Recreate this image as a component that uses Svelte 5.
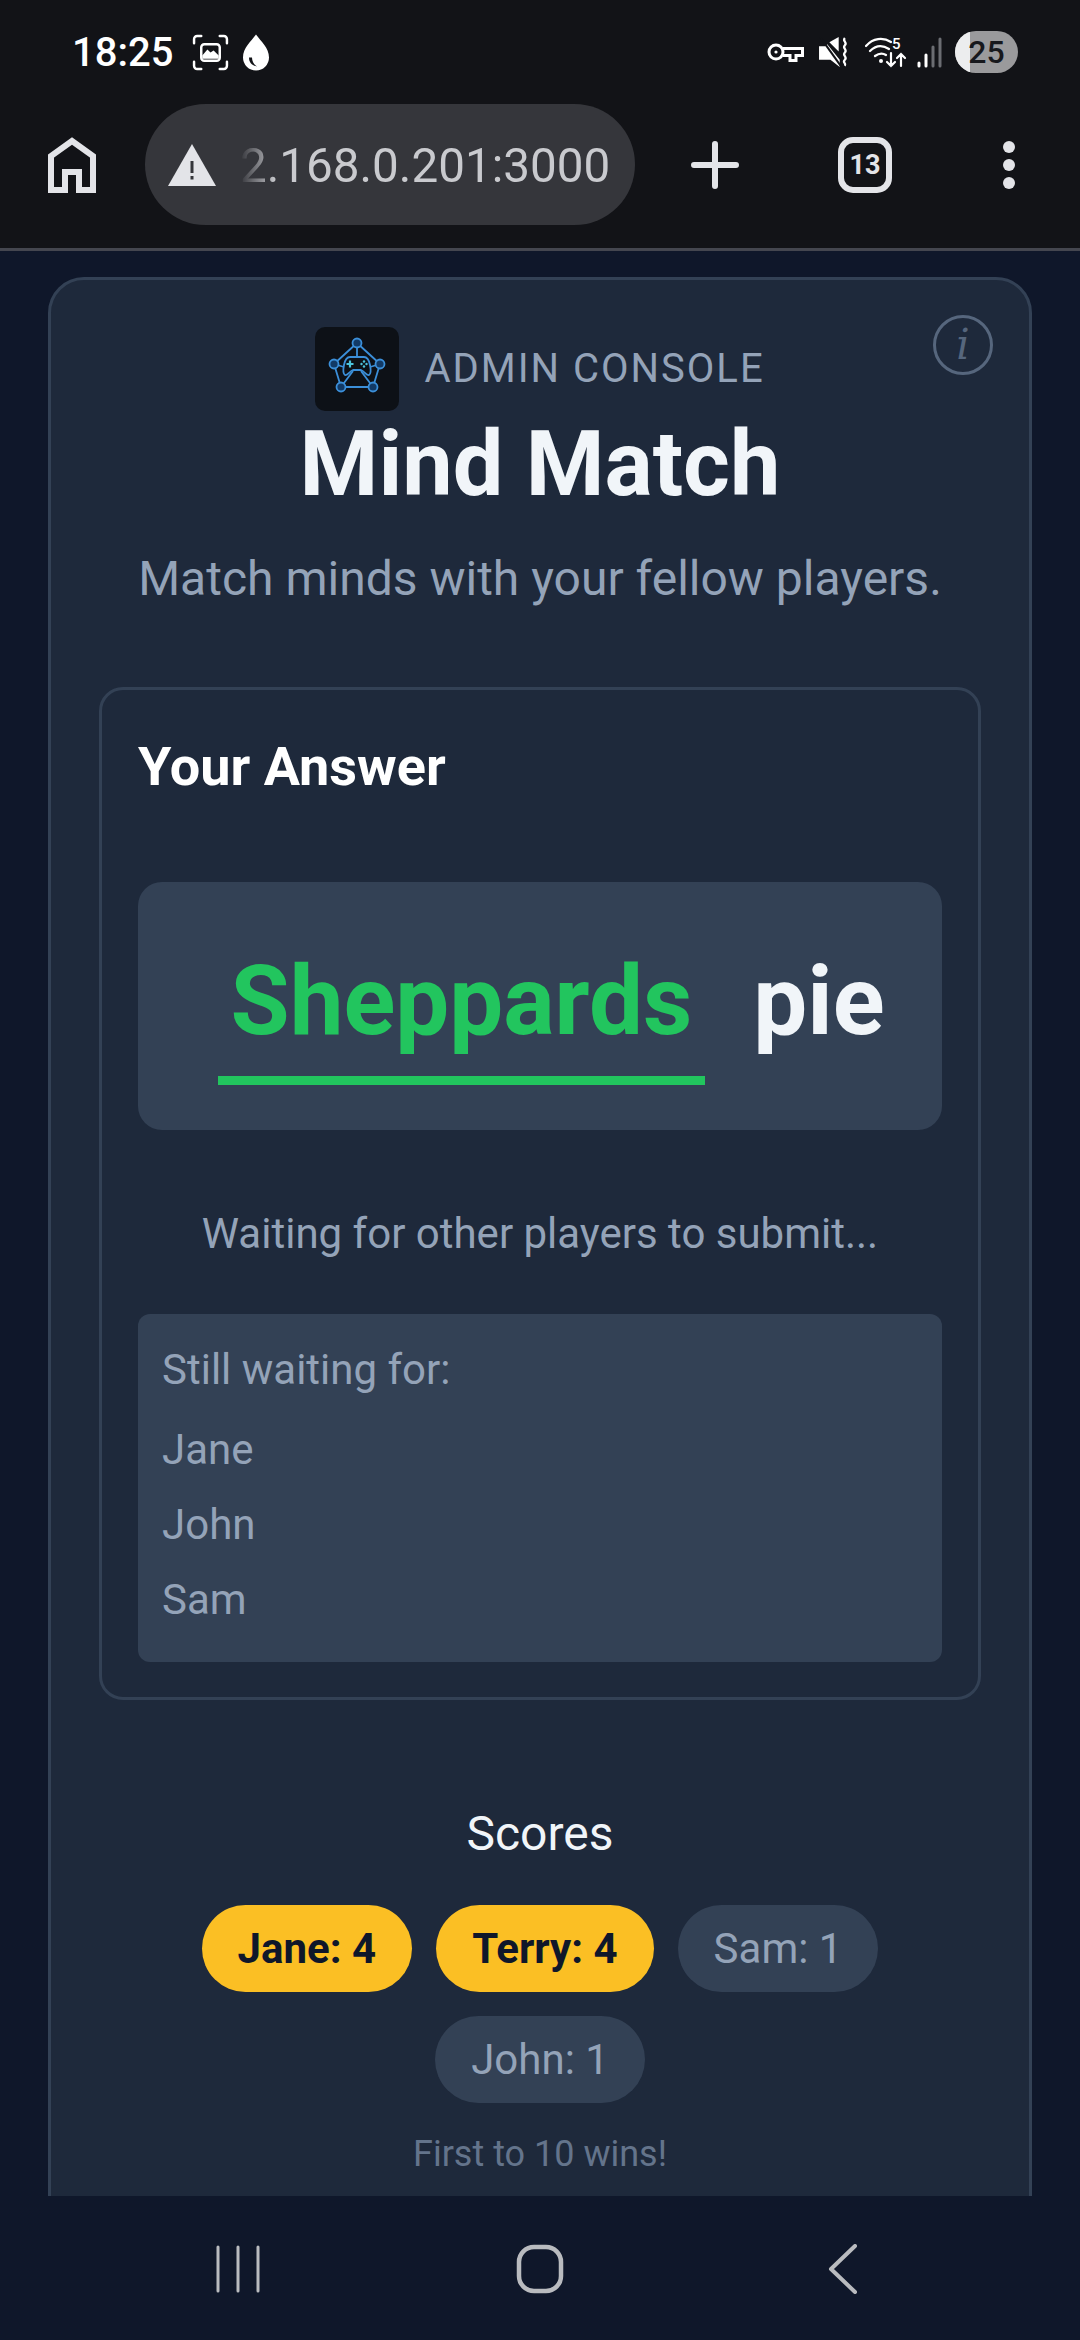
<script>
	const waiting = ['Jane', 'John', 'Sam']
	const scores = [
		{ name: 'Jane', score: 4, lead: true },
		{ name: 'Terry', score: 4, lead: true },
		{ name: 'Sam', score: 1, lead: false },
		{ name: 'John', score: 1, lead: false }
	]
</script>

<div class="phone">
	<header class="chrome">
		<div class="status">
			<div class="status-left">
				<span class="time">18:25</span>
				<svg class="ic-shot" viewBox="0 0 36 36" fill="none" stroke="#fff" stroke-width="2.4" stroke-linecap="round">
					<path d="M2 9V5a3 3 0 0 1 3-3h4M27 2h4a3 3 0 0 1 3 3v4M34 27v4a3 3 0 0 1-3 3h-4M9 34H5a3 3 0 0 1-3-3v-4" />
					<rect x="9" y="10" width="18" height="16" rx="3" />
					<path d="M10 21l5-6 3 3 3-2 5 5v3H10z" fill="#fff" stroke="none" />
				</svg>
				<svg class="ic-drop" viewBox="0 0 28 36">
					<path fill="#fff" fill-rule="evenodd" d="M14 0C19 7 27 13 27 23a13 13 0 0 1-26 0C1 13 9 7 14 0zM7 23c0 5 3 8 8 9-3-2-5-5-5-9z" />
				</svg>
			</div>
			<div class="status-right">
				<svg class="ic-key" viewBox="0 0 37 22" fill="none" stroke="#fff" stroke-width="3">
					<circle cx="9" cy="11" r="7" />
					<circle cx="9" cy="11" r="1.6" fill="#fff" stroke="none" />
					<path d="M16 7.500h19.500v7H29v5h-6v-5h-7" />
				</svg>
				<svg class="ic-mute" viewBox="0 0 30 30" fill="#fff">
					<path d="M1 9h6l2-2 12 15v7l-9-7H1z" />
					<path d="M11 5l9-5v14z" />
					<path d="M2 0l20 28" stroke="#121317" stroke-width="2" />
					<path d="M26 1c-3 3 3 4 0 7s3 4 0 7 3 4 0 7 2 3 0 6" fill="none" stroke="#fff" stroke-width="2.200" />
				</svg>
				<svg class="ic-wifi" viewBox="0 0 42 32" fill="none" stroke="#fff" stroke-width="2.200" stroke-linecap="round">
					<path d="M1 10C8 2 18 1 26 6M5 15c6-6 13-6 19-2M10 20c4-3 8-3 11-1" />
					<circle cx="16" cy="25" r="2" fill="#fff" stroke="none" />
					<text x="27" y="13" class="wifi-5">5</text>
					<path d="M26 17v13M22 26l4 4 4-4M36 30V18M32 22l4-4 4 4" />
				</svg>
				<svg class="ic-signal" viewBox="0 0 27 31" stroke-width="3" stroke-linecap="round">
					<path d="M3 29v-3" stroke="#fff" />
					<path d="M10 29V18" stroke="#fff" />
					<path d="M17 29V10" stroke="#6b6d72" />
					<path d="M24 29V2" stroke="#6b6d72" />
				</svg>
				<div class="battery">
					<span class="battery-fill"></span>
					<span class="battery-num">25</span>
				</div>
			</div>
		</div>
		<div class="toolbar">
			<svg class="ic-home" viewBox="0 0 48 56" fill="none" stroke="#e3e4e8" stroke-width="6">
				<path d="M3 53V19L24 4l21 15v34H31V35H17v18z" />
			</svg>
			<div class="omnibox">
				<svg class="ic-warn" viewBox="0 0 48 42">
					<path fill="#e3e4e8" d="M24 0l24 42H0z" />
					<path fill="#35363b" d="M22.500 17h3v12h-3zM22.500 32h3v3.500h-3z" />
				</svg>
				<span class="url">2.168.0.201:3000</span>
			</div>
			<svg class="ic-plus" viewBox="0 0 48 48" stroke="#e3e4e8" stroke-width="6" stroke-linecap="round">
				<path d="M24 3v42M3 24h42" />
			</svg>
			<div class="tabs">13</div>
			<div class="dots"><i></i><i></i><i></i></div>
		</div>
	</header>

	<main class="viewport">
		<section class="card">
			<svg class="ic-info" viewBox="0 0 60 60" fill="none">
				<circle cx="30" cy="30" r="28.500" stroke="#56667d" stroke-width="3" />
				<text x="30" y="44" class="info-i">i</text>
			</svg>
			<div class="brand">
				<div class="logo">
					<svg viewBox="0 0 84 84" fill="none">
						<path d="M42 16L19 37l7 23h32l7-23zM42 16v14M19 37l10 3M65 37l-10 3M26 60l12-16M58 60L46 44" stroke="#3b8fd9" stroke-width="1.800" stroke-linejoin="round" />
						<path d="M35 30h14c3 0 5 3 6 8s1 9-1 10c-2 1-5-4-8-5h-8c-3 1-6 6-8 5-2-1-2-5-1-10s3-8 6-8z" fill="#0d1117" stroke="#3b8fd9" stroke-width="1.800" />
						<path d="M35 33.500v7M31.500 37h7" stroke="#4cc3dc" stroke-width="2.200" />
						<circle cx="49" cy="34.500" r="1.200" fill="#4cc3dc" /><circle cx="49" cy="39.500" r="1.200" fill="#4cc3dc" />
						<circle cx="46.500" cy="37" r="1.200" fill="#4cc3dc" /><circle cx="51.500" cy="37" r="1.200" fill="#4cc3dc" />
						<g fill="#123a66" stroke="#3b8fd9" stroke-width="1.800">
							<circle cx="42" cy="16" r="4.500" /><circle cx="19" cy="37" r="4.500" /><circle cx="65" cy="37" r="4.500" />
							<circle cx="26" cy="60" r="4.500" /><circle cx="58" cy="60" r="4.500" />
						</g>
					</svg>
				</div>
				<span class="eyebrow">ADMIN CONSOLE</span>
			</div>
			<h1>Mind Match</h1>
			<p class="tagline">Match minds with your fellow players.</p>

			<div class="panel">
				<h2>Your Answer</h2>
				<div class="answer">
					<span class="blank">Sheppards</span>
					<span class="word">pie</span>
				</div>
				<p class="wait-msg">Waiting for other players to submit...</p>
				<div class="waiting">
					<div class="wait-title">Still waiting for:</div>
					{#each waiting as name}
						<div class="wait-name">{name}</div>
					{/each}
				</div>
			</div>

			<h3>Scores</h3>
			<div class="scores">
				{#each scores as s}
					<span class="pill" class:lead={s.lead}>{s.name}: {s.score}</span>
				{/each}
			</div>
			<p class="goal">First to 10 wins!</p>
		</section>
	</main>

	<nav class="navbar">
		<svg class="ic-recents" viewBox="0 0 46 48" stroke="#b9bbbf" stroke-width="3" stroke-linecap="round">
			<path d="M3 2v44M23 2v44M43 2v44" />
		</svg>
		<svg class="ic-navhome" viewBox="0 0 48 50" fill="none" stroke="#b9bbbf" stroke-width="4.500">
			<rect x="3" y="3" width="42" height="44" rx="15" />
		</svg>
		<svg class="ic-back" viewBox="0 0 30 50" fill="none" stroke="#b9bbbf" stroke-width="4" stroke-linecap="round" stroke-linejoin="round">
			<path d="M27 2L3 25l24 23" />
		</svg>
	</nav>
</div>

<style>
	:global(body) {
		margin: 0;
		background: #0f172a;
	}

	.phone {
		width: 1080px;
		height: 2340px;
		display: flex;
		flex-direction: column;
		overflow: hidden;
		font-family: Roboto, sans-serif;
		background: #0f172a;
	}

	.chrome {
		height: 248px;
		flex-shrink: 0;
		background: #121317;
		border-bottom: 3px solid #44464f;
	}

	.status {
		height: 104px;
		padding: 0 0 0 72px;
		display: flex;
		align-items: center;
		justify-content: space-between;
		box-sizing: border-box;
	}

	.status-left,
	.status-right {
		display: flex;
		align-items: center;
	}

	.time {
		color: #fff;
		font-size: 40px;
		font-weight: 500;
		margin-right: 19px;
	}

	.ic-shot { width: 37px; height: 37px; margin-right: 13px; }
	.ic-drop { width: 28px; height: 37px; }
	.status-right { margin-right: 62px; }
	.ic-key { width: 37px; height: 22px; margin-right: 14px; }
	.ic-mute { width: 31px; height: 31px; margin-right: 16px; }
	.ic-wifi { width: 42px; height: 32px; margin-right: 9px; }
	.ic-signal { width: 27px; height: 31px; margin-right: 12px; }

	.wifi-5 {
		font-family: Roboto, sans-serif;
		font-size: 15px;
		font-weight: 500;
		fill: #fff;
		stroke: none;
	}

	.battery {
		position: relative;
		width: 63px;
		height: 42px;
		border-radius: 21px;
		overflow: hidden;
		background: #9a9a9c;
		display: flex;
		align-items: center;
		justify-content: center;
	}

	.battery-fill {
		position: absolute;
		left: 0;
		top: 0;
		bottom: 0;
		width: 15px;
		background: #ecedee;
	}

	.battery-num {
		position: relative;
		font-size: 32px;
		font-weight: 500;
		color: #17181c;
	}

	.toolbar {
		height: 121px;
		display: flex;
		align-items: center;
	}

	.ic-home { width: 48px; height: 56px; margin-left: 48px; flex-shrink: 0; }

	.omnibox {
		width: 490px;
		height: 121px;
		margin-left: 49px;
		border-radius: 61px;
		background: #35363b;
		display: flex;
		align-items: center;
		box-sizing: border-box;
		padding-left: 23px;
		overflow: hidden;
		flex-shrink: 0;
	}

	.ic-warn { width: 48px; height: 42px; flex-shrink: 0; margin-right: 24px; }

	.url {
		font-size: 47.600px;
		line-height: 60px;
		padding-top: 2px;
		color: #c9cace;
		white-space: nowrap;
		-webkit-mask-image: linear-gradient(to right, transparent 0, #000 36px);
		mask-image: linear-gradient(to right, transparent 0, #000 36px);
	}

	.ic-plus { width: 48px; height: 48px; margin-left: 56px; flex-shrink: 0; }

	.tabs {
		box-sizing: border-box;
		width: 54px;
		height: 56px;
		margin-left: 99px;
		border: 6px solid #e3e4e8;
		border-radius: 15px;
		display: flex;
		align-items: center;
		justify-content: center;
		font-size: 27px;
		font-weight: 700;
		color: #e3e4e8;
		flex-shrink: 0;
	}

	.dots {
		display: flex;
		flex-direction: column;
		gap: 6px;
		margin-left: 111px;
	}

	.dots i {
		width: 12px;
		height: 12px;
		border-radius: 50%;
		background: #e3e4e8;
	}

	.viewport {
		flex: 1;
		min-height: 0;
		overflow: hidden;
		padding: 26px 48px 0;
	}

	.card {
		position: relative;
		box-sizing: border-box;
		width: 984px;
		height: 1960px;
		background: #1e293b;
		border: 3px solid #334155;
		border-radius: 36px;
		padding: 47px 48px 0;
	}

	.ic-info {
		position: absolute;
		right: 36px;
		top: 35px;
		width: 60px;
		height: 60px;
	}

	.info-i {
		font-family: 'DejaVu Serif', serif;
		font-style: italic;
		font-size: 42px;
		fill: #56667d;
		text-anchor: middle;
	}

	.brand {
		display: flex;
		align-items: center;
		justify-content: center;
		gap: 25px;
		height: 84px;
	}

	.logo {
		width: 84px;
		height: 84px;
		border-radius: 10px;
		background: #0d1117;
	}

	.logo svg { display: block; width: 84px; height: 84px; }

	.eyebrow {
		font-size: 40px;
		letter-spacing: 2px;
		color: #94a3b8;
		margin-bottom: 2px;
	}

	h1 {
		margin: 6px 0 0;
		font-size: 90px;
		line-height: 96px;
		font-weight: 700;
		text-align: center;
		color: #f1f5f9;
	}

	.tagline {
		margin: 38px 0 0;
		font-size: 48px;
		line-height: 56px;
		text-align: center;
		color: #94a3b8;
	}

	.panel {
		box-sizing: border-box;
		margin: 80px 0 0;
		border: 3px solid #334155;
		border-radius: 24px;
		padding: 39px 36px 35px;
	}

	h2 {
		margin: 0;
		font-size: 54px;
		line-height: 76px;
		font-weight: 700;
		color: #fff;
	}

	.answer {
		box-sizing: border-box;
		height: 248px;
		margin-top: 77px;
		padding: 18px 0 0 22px;
		border-radius: 24px;
		background: #334155;
		display: flex;
		align-items: center;
		justify-content: center;
		gap: 48px;
		font-size: 96px;
		font-weight: 700;
		color: #f1f5f9;
	}

	.blank {
		color: #22c55e;
		border-bottom: 9px solid #22c55e;
		padding: 0 13px 19px;
		line-height: 112px;
	}

	.word { padding-bottom: 28px; line-height: 112px; }

	.wait-msg {
		margin: 77px 0 0;
		text-align: center;
		font-size: 42px;
		line-height: 54px;
		color: #94a3b8;
	}

	.waiting {
		box-sizing: border-box;
		height: 348px;
		margin-top: 53px;
		padding: 29px 24px;
		border-radius: 12px;
		background: #334155;
		font-size: 42px;
		color: #94a3b8;
	}

	.wait-title { line-height: 54px; margin-bottom: 26px; }
	.wait-name { line-height: 54px; margin-bottom: 21px; }

	h3 {
		margin: 106px 0 0;
		font-size: 48px;
		line-height: 56px;
		font-weight: 400;
		text-align: center;
		color: #f1f5f9;
	}

	.scores {
		display: flex;
		flex-wrap: wrap;
		justify-content: center;
		gap: 24px;
		margin-top: 43px;
		padding: 0 60px;
	}

	.pill {
		height: 87px;
		padding: 0 36px;
		border-radius: 44px;
		display: flex;
		align-items: center;
		background: #334155;
		color: #94a3b8;
		font-size: 42px;
	}

	.pill.lead {
		background: #fbbf24;
		color: #0f172a;
		font-weight: 700;
	}

	.goal {
		margin: 29px 0 0;
		text-align: center;
		font-size: 36px;
		line-height: 44px;
		color: #64748b;
	}

	.navbar {
		height: 144px;
		flex-shrink: 0;
		background: #0f172a;
		display: flex;
		align-items: center;
		box-sizing: border-box;
		padding-top: 2px;
	}

	.ic-recents { width: 46px; height: 48px; margin-left: 215px; }
	.ic-navhome { width: 48px; height: 50px; margin-left: 255px; }
	.ic-back { width: 30px; height: 50px; margin-left: 264px; }
</style>
